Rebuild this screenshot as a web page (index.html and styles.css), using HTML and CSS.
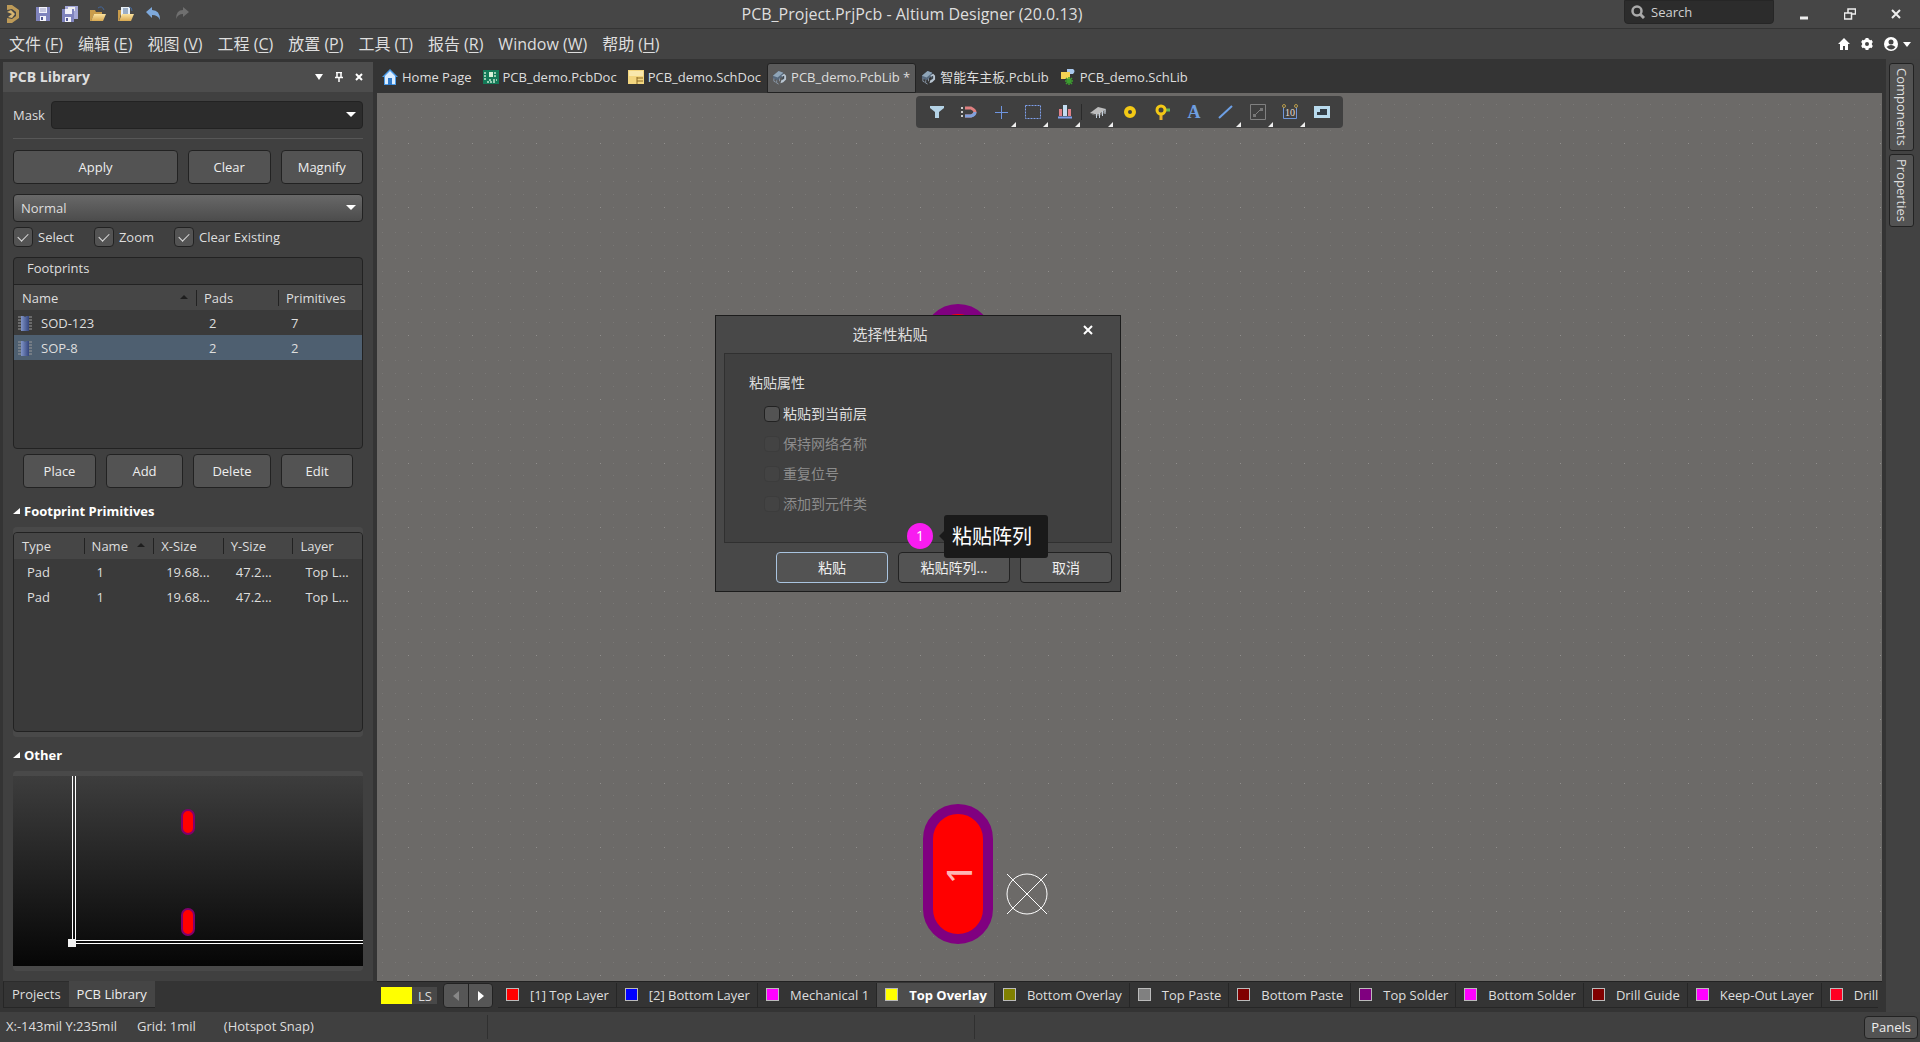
FILE: index.html
```html
<!DOCTYPE html>
<html lang="zh-CN">
<head>
<meta charset="utf-8">
<title>PCB_Project.PrjPcb - Altium Designer (20.0.13)</title>
<link rel="stylesheet" href="styles.css">
</head>
<body>
<svg class="defs" width="0" height="0" aria-hidden="true">
  <defs>
    <linearGradient id="chip" x1="0" x2="1"><stop offset="0" stop-color="#8094c8"/><stop offset="1" stop-color="#34457c"/></linearGradient>
    <linearGradient id="folder" x1="0" x2="0" y1="0" y2="1"><stop offset="0" stop-color="#fbe3a0"/><stop offset="1" stop-color="#d9a951"/></linearGradient>
    <symbol id="i-footprint" viewBox="0 0 16 16">
      <path d="M1 2h3M1 5h3M1 8h3M1 11h3M1 14h3M12 2h3M12 5h3M12 8h3M12 11h3M12 14h3" stroke="#9a9a9a"/>
      <path d="M4 1h2.500q1.500 1.500 3 0H12v15H4z" fill="url(#chip)"/>
    </symbol>
    <symbol id="i-lib" viewBox="0 0 16 16">
      <path d="M1 6l6-5 5 2v3l-6 5-5-2z" fill="#56687c"/>
      <path d="M1 6l6-5 5 2-6 5z" fill="#8fa5b8"/>
      <path d="M2 9v3l2 1M5 11v3l2 1M8 9v3" fill="none" stroke="#8a98a8"/>
      <path d="M10 6l3-2 2 2v4l-3 3-3 1 1-3 2-2z" fill="#b9c6d2"/>
      <path d="M11 7l2-1v3l-2 2z" fill="#3c4650"/>
    </symbol>
  </defs>
</svg>

<header class="titlebar">
  <div class="quick">
    <svg width="14" height="20" viewBox="0 0 14 20"><path d="M1 1l5 0 7 5v8l-7 5H1v-5l5 1 4-3V8L6 5 1 6z" fill="#bd9a57"/><path d="M1 8l5 2-4 3 4 1 3-4-4-4z" fill="#d9b671"/></svg>
    <button aria-label="Save"><svg width="14" height="14" viewBox="0 0 14 14"><path d="M0 0h14v14H0z" fill="#7f83bd"/><path d="M3 0h8v6H3zM4 9h6v5H4z" fill="#f3f3fb"/><path d="M4 2h6M4 4h6" stroke="#9a9cc4"/><path d="M5 10h2v3H5z" fill="#555a94"/></svg></button>
    <button aria-label="Save all"><svg width="16" height="16" viewBox="0 0 16 16"><path d="M3 0h13v13H3z" fill="#a3a6d6"/><path d="M6 1h7v4H6z" fill="#eee"/><path d="M0 3h12v13H0z" fill="#7f83bd"/><path d="M3 3h7v5H3zM3 11h6v5H3z" fill="#f3f3fb"/><path d="M4 12h2v3H4z" fill="#555a94"/></svg></button>
    <button aria-label="Open"><svg width="16" height="16" viewBox="0 0 16 16"><path d="M0 4h5l1 2h6v2H4L1 15H0z" fill="#c99c4b"/><path d="M4 8h12l-3 7H1z" fill="url(#folder)"/><path d="M8 2q4-3 6 2" stroke="#43669a" fill="none"/></svg></button>
    <button aria-label="Open project"><svg width="16" height="16" viewBox="0 0 16 16"><path d="M0 4h3v4l-2 7H0z" fill="#c99c4b"/><path d="M3 1h9v9H3z" fill="#e9f0f7"/><path d="M5 3h5M5 5h5M5 7h5" stroke="#4c6c96"/><path d="M4 8h12l-3 7H1z" fill="url(#folder)"/><path d="M11 1q3 0 3 4" stroke="#43669a" fill="none"/></svg></button>
    <button aria-label="Undo"><svg width="16" height="16" viewBox="0 0 16 16"><path d="M0 6l6-5v3q8 0 8 10-2-5-8-5v3z" fill="#7ea9dc"/></svg></button>
    <button aria-label="Redo"><svg width="16" height="16" viewBox="0 0 16 16"><path d="M15 6l-6-5v3Q2 4 2 13q2-5 7-5v3z" fill="#6f6f6f"/></svg></button>
  </div>
  <h1>PCB_Project.PrjPcb - Altium Designer (20.0.13)</h1>
  <div class="window-tools">
    <label class="search"><svg width="14" height="14" viewBox="0 0 14 14"><circle cx="6" cy="6" r="4.500" fill="none" stroke="#aaa" stroke-width="2.500"/><path d="M9 9l4 4" stroke="#aaa" stroke-width="3"/></svg><input type="text" placeholder="Search" aria-label="Search"></label>
    <button aria-label="Minimize"><svg width="12" height="12"><path d="M2 10h8" stroke="#eee" stroke-width="3"/></svg></button>
    <button aria-label="Restore"><svg width="12" height="12" viewBox="0 0 12 12"><path d="M4 5V1h7.500v5H8M.5 5h7v6h-7z" fill="none" stroke="#eee" stroke-width="1.500"/></svg></button>
    <button aria-label="Close"><svg width="12" height="12" viewBox="0 0 12 12"><path d="M2 2l8 8M10 2l-8 8" stroke="#eee" stroke-width="2"/></svg></button>
  </div>
</header>

<nav class="menubar">
  <a href="#">文件 (<u>F</u>)</a><a href="#">编辑 (<u>E</u>)</a><a href="#">视图 (<u>V</u>)</a><a href="#">工程 (<u>C</u>)</a><a href="#">放置 (<u>P</u>)</a><a href="#">工具 (<u>T</u>)</a><a href="#">报告 (<u>R</u>)</a><a href="#">Window (<u>W</u>)</a><a href="#">帮助 (<u>H</u>)</a>
  <div class="account">
    <button aria-label="Home"><svg width="12" height="12" viewBox="0 0 12 12"><path d="M6 0l6 6h-2v6H7V8H5v4H2V6H0z" fill="#fff"/></svg></button>
    <button aria-label="Settings"><svg width="14" height="14" viewBox="0 0 14 14"><circle cx="7" cy="7" r="3.500" fill="none" stroke="#fff" stroke-width="3"/><path d="M7 1v2M7 11v2M1.800 4l1.700 1M10.500 9l1.700 1M12.200 4l-1.700 1M3.500 9l-1.700 1" stroke="#fff" stroke-width="3"/></svg></button>
    <button class="user" aria-label="Account"><svg width="14" height="14" viewBox="0 0 14 14"><circle cx="7" cy="7" r="7" fill="#fff"/><circle cx="7" cy="5" r="2.500" fill="#444"/><path d="M2.500 10q4.500-4 9 0-4 5-9 0z" fill="#444"/></svg><svg width="8" height="5"><path d="M0 0h8L4 5z" fill="#fff"/></svg></button>
  </div>
</nav>

<main class="workspace">
  <aside class="side">
    <section class="panel">
      <header class="panel-head">
        <h2>PCB Library</h2>
        <button aria-label="Panel menu"><svg width="8" height="6"><path d="M0 0h8L4 6z" fill="#fff"/></svg></button>
        <button aria-label="Pin"><svg width="8" height="10" viewBox="0 0 8 10"><path d="M2 0v5M6 0v5M1 .5h6M0 5.500h8M4 6v4" stroke="#fff" stroke-width="1.500"/></svg></button>
        <button aria-label="Close panel"><svg width="8" height="8" viewBox="0 0 8 8"><path d="M1 1l6 6M7 1L1 7" stroke="#fff" stroke-width="2"/></svg></button>
      </header>
      <div class="panel-body">
        <div class="mask"><label for="mask">Mask</label><span class="combo dark"><select id="mask"><option></option></select></span></div>
        <div class="actions">
          <button class="btn wide">Apply</button><button class="btn">Clear</button><button class="btn">Magnify</button>
        </div>
        <span class="combo normal"><select aria-label="Display mode"><option>Normal</option></select></span>
        <div class="checks">
          <label><input type="checkbox" checked>Select</label>
          <label><input type="checkbox" checked>Zoom</label>
          <label><input type="checkbox" checked>Clear Existing</label>
        </div>
        <div class="listbox footprints">
          <h3>Footprints</h3>
          <table>
            <colgroup><col class="c-name"><col class="c-pads"><col></colgroup>
            <thead><tr><th class="sorted">Name</th><th>Pads</th><th>Primitives</th></tr></thead>
            <tbody>
              <tr><td><span class="fp"><svg width="16" height="16"><use href="#i-footprint"/></svg>SOD-123</span></td><td>2</td><td>7</td></tr>
              <tr class="selected"><td><span class="fp"><svg width="16" height="16"><use href="#i-footprint"/></svg>SOP-8</span></td><td>2</td><td>2</td></tr>
            </tbody>
          </table>
        </div>
        <div class="edit-actions">
          <button class="btn">Place</button><button class="btn">Add</button><button class="btn">Delete</button><button class="btn">Edit</button>
        </div>
        <h3 class="section"><svg width="7" height="6"><path d="M7 0v6H0z" fill="#fff"/></svg>Footprint Primitives</h3>
        <div class="frame">
          <div class="listbox primitives">
            <table>
              <colgroup><col class="c-five"><col class="c-five"><col class="c-five"><col class="c-five"><col></colgroup>
              <thead><tr><th>Type</th><th class="sorted">Name</th><th>X-Size</th><th>Y-Size</th><th>Layer</th></tr></thead>
              <tbody>
                <tr><td>Pad</td><td>1</td><td>19.68...</td><td>47.2...</td><td>Top L...</td></tr>
                <tr><td>Pad</td><td>1</td><td>19.68...</td><td>47.2...</td><td>Top L...</td></tr>
              </tbody>
            </table>
          </div>
        </div>
        <h3 class="section"><svg width="7" height="6"><path d="M7 0v6H0z" fill="#fff"/></svg>Other</h3>
        <div class="frame">
          <svg class="preview" height="190" role="img" aria-label="Footprint preview">
            <path d="M59.500 0v168M62.500 0v165M60 164.500h2000M60 167.500h2000" stroke="#fff"/>
            <path d="M55 163h8v8h-8z" fill="#f2f2f2"/>
            <g fill="#f00" stroke="#80006c" stroke-width="2"><rect x="169" y="34" width="12" height="24" rx="6"/><rect x="169" y="133" width="12" height="26" rx="6"/></g>
          </svg>
        </div>
      </div>
    </section>
    <nav class="panel-tabs"><button>Projects</button><button class="active">PCB Library</button></nav>
  </aside>

  <section class="editor">
    <nav class="doc-tabs">
      <a href="#"><svg width="16" height="16" viewBox="0 0 16 16"><path d="M8 0l8 8h-2v8H2V8H0z" fill="#4b9be8"/><path d="M8 2l5 5v8H3V7z" fill="#d9ecff"/><path d="M6 9h4v7H6z" fill="#2d78c8"/></svg>Home Page</a>
      <a href="#"><svg width="16" height="14" viewBox="0 0 16 14"><path d="M0 0h16v14H0z" fill="#147a58"/><path d="M6 2h4v5H6z" fill="#d8f0d8"/><path d="M2 2v8M12 2v5M6 10h2M10 10h4M4 12h8" stroke="#c4e8d0" stroke-width="1.500" stroke-dasharray="2 1"/></svg>PCB_demo.PcbDoc</a>
      <a href="#"><svg width="16" height="14" viewBox="0 0 16 14"><path d="M0 0h16v14H0z" fill="#f3d67f"/><path d="M1 1h14v5H1z" fill="#f9e8ac"/><path d="M9 8h6M9 11h6M9 7v7" stroke="#8c6b25"/></svg>PCB_demo.SchDoc</a>
      <a href="#" class="active"><svg width="15" height="15"><use href="#i-lib"/></svg>PCB_demo.PcbLib *</a>
      <a href="#"><svg width="15" height="15"><use href="#i-lib"/></svg>智能车主板.PcbLib</a>
      <a href="#"><svg width="16" height="16" viewBox="0 0 16 16"><path d="M7 0h6q3 2 0 5H7z" fill="#a8c8ee"/><path d="M1 3h9v7H1z" fill="#f4d253"/><path d="M9 8v8M5 12h8M6 9l6 6M12 9l-6 6" stroke="#3c9e2f" stroke-width="1.500"/></svg>PCB_demo.SchLib</a>
    </nav>

    <div class="canvas">
      <svg class="board" width="100%" height="100%" aria-label="Footprint drawing">
        <defs>
          <pattern id="grid" width="64" height="64" patternUnits="userSpaceOnUse" x="31" y="50">
            <path d="M0 12.500h64M0 25.500h64M0 38.500h64M0 51.500h64M0 .5h64" stroke="#7a7876" stroke-dasharray="1 12 1 12 1 11 1 12 1 12"/>
            <path d="M0 .5h1" stroke="#908e8c"/>
          </pattern>
        </defs>
        <rect width="100%" height="100%" fill="url(#grid)"/>
        <g fill="#f00" stroke="#800080" stroke-width="10">
          <rect x="551" y="216" width="60" height="130" rx="30"/>
          <rect x="551" y="716" width="60" height="130" rx="30"/>
        </g>
        <text class="pad-no" transform="translate(595 781) rotate(-90)" text-anchor="middle">1</text>
        <g fill="none" stroke="#fff"><circle cx="650" cy="801" r="20"/><path d="M630 781l40 40M670 781l-40 40"/></g>
      </svg>

      <div class="toolbar">
        <button aria-label="Filter"><svg viewBox="0 0 16 16"><path d="M1 2h14v2l-5 4v6H6V8L1 4z" fill="#b5d3e6"/></svg></button>
        <button aria-label="Snapping"><svg viewBox="0 0 16 16"><path d="M4 4h6q8 4 0 8H4" fill="none" stroke="#e08080" stroke-width="3"/><path d="M4 12h6q4-1 4-4" fill="none" stroke="#7fa0dc" stroke-width="3"/><path d="M1 3v11" stroke="#ccc" stroke-width="2" stroke-dasharray="2 2"/></svg></button>
        <button class="more" aria-label="Place cursor"><svg viewBox="0 0 16 16"><path d="M8.500 2v13M2 8.500h13" stroke="#6f95e0"/></svg></button>
        <button class="more" aria-label="Selection"><svg viewBox="0 0 16 16"><path d="M.5 1.500h15v13H.5z" fill="none" stroke="#7ea0ec" stroke-dasharray="2 1"/></svg></button>
        <button class="more" aria-label="Align"><svg viewBox="0 0 16 16"><path d="M2 5h3v7H2zM11 5h3v7h-3z" fill="#e08088"/><path d="M6 1h4v11H6z" fill="#c4ddf2"/><path d="M1 13.500h14" stroke="#7fa0ec" stroke-width="2"/></svg></button>
        <i class="sep"></i>
        <button class="more" aria-label="Component"><svg viewBox="0 0 16 16"><path d="M0 9l8-6 8 2-7 6z" fill="#bdbdbd"/><path d="M0 9l6 2 3-1 7-5v3l-7 4-6-1z" fill="#777"/><path d="M6.500 10v4M9.500 9v5M12.500 7v5M15 5v5" stroke="#c5d0db"/></svg></button>
        <button aria-label="Pad"><svg viewBox="0 0 16 16"><circle cx="8" cy="8" r="4" fill="none" stroke="#f3c915" stroke-width="4"/></svg></button>
        <button aria-label="Via"><svg viewBox="0 0 16 16"><path d="M7 9v7" stroke="#e6b32b" stroke-width="3"/><path d="M10 6h6" stroke="#65b650" stroke-width="3"/><circle cx="7" cy="6" r="4" fill="none" stroke="#f3c915" stroke-width="3"/></svg></button>
        <button class="letter" aria-label="String">A</button>
        <button class="more" aria-label="Line"><svg viewBox="0 0 16 16"><path d="M1 14L14 2" stroke="#6da0e6" stroke-width="2"/></svg></button>
        <button class="more" aria-label="Constraint"><svg viewBox="0 0 16 16"><path d="M.5.5h15v15H.5zM5 11l6-6" fill="none" stroke="#808080"/><path d="M3 10h3v3H3zM10 4h3v3h-3z" fill="#777"/></svg></button>
        <button class="more" aria-label="Dimension"><svg viewBox="0 0 16 16"><path d="M1.500 3v11.500h13V3" fill="none" stroke="#7096da"/><text x="3" y="12" class="dim">10</text><circle cx="2" cy="2" r="1.500" fill="none" stroke="#b89b4c"/><circle cx="14" cy="2" r="1.500" fill="none" stroke="#b89b4c"/></svg></button>
        <button aria-label="Board cutout"><svg viewBox="0 0 16 16"><path d="M0 2h16v12H0z" fill="#b9dbee"/><path d="M6 5h7v6H3V8h3z" fill="#333d46"/></svg></button>
      </div>

      <div class="dialog" role="dialog" aria-labelledby="dlg-title">
        <header><h2 id="dlg-title">选择性粘贴</h2><button aria-label="关闭"><svg width="10" height="10" viewBox="0 0 10 10"><path d="M1 1l8 8M9 1L1 9" stroke="#fff" stroke-width="2"/></svg></button></header>
        <fieldset>
          <h3>粘贴属性</h3>
          <label><input type="checkbox">粘贴到当前层</label>
          <label class="off"><input type="checkbox" disabled>保持网络名称</label>
          <label class="off"><input type="checkbox" disabled>重复位号</label>
          <label class="off"><input type="checkbox" disabled>添加到元件类</label>
        </fieldset>
        <footer><button class="btn focus">粘贴</button><button class="btn">粘贴阵列...</button><button class="btn last">取消</button></footer>
        <span class="badge">1</span>
        <span class="tip">粘贴阵列</span>
      </div>
    </div>

    <nav class="layers">
      <button class="layer-set"><i></i>LS</button>
      <span class="scroll"><button aria-label="Previous layer"><svg width="6" height="10"><path d="M6 0v10L0 5z" fill="#888"/></svg></button><button aria-label="Next layer"><svg width="6" height="10"><path d="M0 0v10l6-5z" fill="#fff"/></svg></button></span>
      <div class="layer-tabs">
        <button><i class="red"></i>[1] Top Layer</button>
        <button><i class="blue"></i>[2] Bottom Layer</button>
        <button><i class="magenta"></i>Mechanical 1</button>
        <button class="active"><i class="yellow"></i>Top Overlay</button>
        <button><i class="olive"></i>Bottom Overlay</button>
        <button><i class="gray"></i>Top Paste</button>
        <button><i class="maroon"></i>Bottom Paste</button>
        <button><i class="purple"></i>Top Solder</button>
        <button><i class="magenta"></i>Bottom Solder</button>
        <button><i class="maroon"></i>Drill Guide</button>
        <button><i class="magenta"></i>Keep-Out Layer</button>
        <button><i class="crimson"></i>Drill</button>
      </div>
    </nav>
  </section>

  <aside class="dock"><button>Components</button><button>Properties</button></aside>
</main>

<footer class="status">
  <div class="coords"><span>X:-143mil Y:235mil</span><span>Grid: 1mil</span><span class="snap">(Hotspot Snap)</span></div>
  <div class="message"></div>
  <button class="btn">Panels</button>
</footer>
</body>
</html>
```
FILE: styles.css
```css
* { box-sizing: border-box; }

body {
  margin: 0;
  min-height: 100vh;
  display: flex;
  flex-direction: column;
  background: #343434;
  color: #dedede;
  font: 13px/18px "Open Sans", "Noto Sans CJK SC", sans-serif;
}

h1, h2, h3 { margin: 0; font-size: 13px; font-weight: 400; }
button, input, select { font: inherit; color: inherit; margin: 0; }
button { padding: 0; border: 0; background: none; white-space: nowrap; }
svg { display: block; flex: none; }
a { color: inherit; text-decoration: none; }
.defs { position: absolute; }

.btn {
  height: 34px;
  border: 1px solid #222;
  border-radius: 4px;
  background: #535353;
  color: #eee;
}

/* Title bar */
.titlebar {
  height: 29px;
  display: grid;
  grid-template-columns: 1fr auto 1fr;
  align-items: center;
  background: #464646;
  border-bottom: 1px solid #343434;
}
.titlebar h1 { font-size: 16px; margin-right: 96px; }
.quick { display: flex; align-items: center; gap: 12px; padding-left: 6px; }
.quick > svg { margin-right: 4px; }
.window-tools { display: flex; justify-content: flex-end; align-self: stretch; align-items: center; padding-right: 1px; }
.window-tools button { width: 46px; display: flex; justify-content: center; }
.search {
  width: 150px;
  height: 24px;
  align-self: flex-start;
  margin-right: 7px;
  display: flex;
  align-items: center;
  gap: 6px;
  padding: 0 6px;
  background: #2c2c2c;
  border: 1px solid #262626;
  border-radius: 0 0 4px 4px;
}
.search input { flex: 1; min-width: 0; padding: 0; border: 0; background: none; }
.search input::placeholder { color: #d0d0d0; opacity: 1; }

/* Menu */
.menubar {
  height: 30px;
  display: flex;
  align-items: center;
  gap: 15px;
  padding: 0 9px;
  background: #434343;
  font-size: 16px;
  white-space: nowrap;
}
.menubar u { text-underline-offset: 2px; }
.account { margin-left: auto; display: flex; align-items: center; gap: 10px; }
.account .user { display: flex; align-items: center; gap: 5px; }

/* Workspace */
.workspace { flex: 1; display: flex; min-height: 0; }
.side { width: 377px; flex: none; display: flex; flex-direction: column; padding: 3px 4px 4px 3px; }
.panel { flex: 1; background: #404040; }
.panel-head {
  height: 30px;
  display: flex;
  align-items: center;
  gap: 12px;
  padding: 0 10px 0 6px;
  background: #4d4d4d;
}
.panel-head h2 { font-weight: 700; font-size: 14px; margin-right: auto; }
.panel-body { padding: 9px 10px 10px; display: flex; flex-direction: column; }

.mask { display: flex; align-items: center; gap: 6px; padding-bottom: 9px; border-bottom: 1px solid #575757; }
.mask .combo { flex: 1; }
.combo { position: relative; display: block; }
.combo select {
  display: block;
  width: 100%;
  height: 28px;
  padding: 0 7px;
  appearance: none;
  border: 1px solid #222;
  border-radius: 4px;
  background: #2c2c2c;
}
.combo.normal select { background: linear-gradient(#686868, #4c4c4c); }
.combo::after {
  content: "";
  position: absolute;
  right: 7px;
  top: 11px;
  border: 5px solid transparent;
  border-top-color: #fff;
  border-bottom-width: 0;
}

.actions { display: grid; grid-template-columns: 2fr 1fr 1fr; gap: 10px; margin: 11px 0 10px; }
.checks { display: flex; gap: 20px; margin: 5px 0 10px; }
.checks label { display: flex; align-items: center; gap: 5px; }
input[type="checkbox"] {
  appearance: none;
  width: 20px;
  height: 20px;
  margin: 0;
  border: 1px solid #222;
  border-radius: 4px;
  background: #535353;
}
input[type="checkbox"]:checked::before {
  content: "";
  display: block;
  width: 9px;
  height: 5px;
  margin: 5px 0 0 4px;
  border: solid #ddd;
  border-width: 0 0 1px 1px;
  rotate: -45deg;
}

/* Lists */
.listbox { border: 1px solid #222; border-radius: 4px; background: #3a3a3a; overflow: hidden; }
.listbox h3 { height: 27px; padding: 1px 13px; border-bottom: 1px solid #222; }
.footprints { height: 192px; }
.primitives { height: 200px; }
table { width: 100%; table-layout: fixed; border-collapse: collapse; }
th, td { height: 25px; padding: 0 0 0 13px; text-align: left; font-weight: 400; overflow: hidden; white-space: nowrap; }
th { padding-left: 8px; background: #464646; position: relative; }
th + th { background: linear-gradient(#222, #222) no-repeat 0 50% / 1px 16px #464646; }
.sorted::after {
  content: "";
  position: absolute;
  right: 8px;
  top: 10px;
  border: 4px solid transparent;
  border-bottom-color: #1e1e1e;
  border-top-width: 0;
}
.c-name { width: 182px; }
.c-pads { width: 82px; }
.c-five { width: 20%; }
.selected { background: #4e5f70; }
.primitives th { height: 26px; }
.footprints td:first-child { padding-left: 3px; }
.fp { display: flex; align-items: center; gap: 8px; }

.edit-actions { display: grid; grid-template-columns: 73fr 77fr 78fr 72fr; gap: 10px; padding: 5px 10px 12px; }
.section { display: flex; align-items: center; gap: 4px; height: 22px; font-weight: 700; color: #fff; margin-bottom: 5px; }
.frame { padding: 5px 0; background: #494949; border-radius: 4px; }
.frame + .section { margin-top: 7px; }
.preview { width: 100%; background: linear-gradient(#3d3d3d, #060606); }

.panel-tabs { display: flex; height: 27px; }
.panel-tabs button { padding: 0 8px 2px; border: 1px solid #262626; border-top-color: #2c2c2c; border-right-width: 0; }
.panel-tabs .active { background: #454545; border-color: #454545 #262626 #262626 #454545; border-left-width: 0; color: #eee; }

/* Editor */
.editor { flex: 1; min-width: 0; display: flex; flex-direction: column; }
.doc-tabs { height: 34px; display: flex; align-items: flex-end; }
.doc-tabs a { height: 30px; display: flex; align-items: center; gap: 4px; padding: 0 5px 2px 4px; border: 1px solid transparent; white-space: nowrap; }
.doc-tabs .active { background: #5a5a5a; border-color: #222; border-radius: 3px 3px 0 0; }
.canvas { flex: 1; position: relative; display: flex; flex-direction: column; background: #6c6a68; overflow: hidden; }
.board { position: absolute; inset: 0; }
.pad-no { font: 500 34px "Noto Sans", sans-serif; fill: #ffb4b4; stroke: none; }

.toolbar {
  position: relative;
  align-self: center;
  display: flex;
  align-items: center;
  height: 32px;
  margin-top: 3px;
  padding: 0 5px;
  background: #404040;
  border-radius: 4px;
}
.toolbar button { width: 32px; height: 32px; display: flex; align-items: center; justify-content: center; position: relative; }
.toolbar svg { width: 16px; height: 16px; }
.toolbar .letter { font: 700 18px "Liberation Serif", serif; color: #6f9fe0; }
.toolbar .sep { width: 1px; height: 16px; background: #2a2a2a; }
.more::after { content: ""; position: absolute; right: 1px; bottom: 1px; border: solid transparent; border-width: 5px 0 0 5px; border-bottom: 5px solid #eee; border-top: 0; }
.dim { font: 10px "Liberation Serif", serif; fill: #e6ddd0; }

/* Paste dialog */
.dialog {
  position: absolute;
  left: 338px;
  top: 222px;
  width: 406px;
  padding: 0 8px 8px;
  background: #484848;
  border: 1px solid #1c1c1c;
  font-size: 14px;
}
.dialog header { height: 37px; display: grid; grid-template-columns: 48px 1fr 48px; align-items: center; }
.dialog h2 { grid-column: 2; padding: 0 56px 2px 0; text-align: center; font-size: 15px; }
.dialog header button { height: 28px; display: flex; align-items: center; justify-content: center; align-self: start; }
.dialog fieldset { margin: 0 0 9px; min-width: 0; height: 190px; padding: 19px 24px; border: 1px solid #303030; background: #404040; }
.dialog h3 { font-size: 14px; line-height: 20px; margin-bottom: 6px; }
.dialog label { display: flex; align-items: center; gap: 3px; height: 30px; padding-left: 15px; }
.dialog input { width: 16px; height: 16px; }
.dialog .off { color: #8c8c8c; }
.dialog .off input { border-color: #3c3c3c; background: #434343; }
.dialog footer { display: flex; justify-content: flex-end; gap: 10px; }
.dialog .btn { width: 112px; height: 31px; }
.dialog .last { width: 92px; }
.dialog .focus { border-color: #a9c4e0; }
.badge {
  position: absolute;
  left: 191px;
  top: 207px;
  width: 26px;
  height: 26px;
  border-radius: 50%;
  background: #f81cf0;
  color: #fff;
  line-height: 25px;
  text-align: center;
}
.tip {
  position: absolute;
  left: 228px;
  top: 199px;
  width: 104px;
  height: 43px;
  padding-left: 8px;
  border-radius: 3px;
  background: #1a1a1a;
  color: #fff;
  font-size: 20px;
  line-height: 43px;
}
.tip::before { content: ""; position: absolute; right: 100%; top: 16px; border: 5px solid transparent; border-right-color: #1a1a1a; border-left-width: 0; }

/* Layers */
.layers { height: 31px; display: flex; padding: 1px 0 4px 4px; border-top: 1px solid #222; }
.layer-set { height: 17px; width: 56px; margin: 4px 6px 0 0; display: flex; align-items: center; gap: 6px; background: #484848; }
.layer-set i { width: 31px; height: 17px; background: #ff0; }
.scroll { display: flex; height: 25px; margin-right: 5px; border: 1px solid #222; border-radius: 4px; background: #565656; }
.scroll button { width: 24px; display: flex; align-items: center; justify-content: center; }
.scroll button + button { border-left: 1px solid #222; }
.layer-tabs { flex: 1; min-width: 0; display: flex; overflow: hidden; }
.layer-tabs button { flex: none; display: flex; align-items: center; gap: 11px; padding: 0 7px 1px 8px; border-right: 1px solid #262626; border-bottom: 1px solid #262626; }
.layer-tabs button:last-child { padding-right: 0; border-right: 0; }
.layer-tabs i { width: 13px; height: 13px; border: 1px solid #bbb; }
.layer-tabs .active { background: #4d4d4d; color: #fff; font-weight: 700; }
.red { background: #f00; }
.blue { background: #00f; }
.magenta { background: #f0f; }
.yellow { background: #ff0; }
.olive { background: #808000; }
.gray { background: #808080; }
.maroon { background: #800000; }
.purple { background: #800080; }
.crimson { background: #f02; }

/* Right dock */
.dock { width: 38px; flex: none; display: flex; flex-direction: column; gap: 3px; padding: 4px 6px 0 3px; border-left: 4px solid #343434; background: #424242; }
.dock button { width: 25px; writing-mode: vertical-rl; padding: 4px 0; border: 1px solid #222; border-radius: 3px; background: #535353; }

/* Status bar */
.status { height: 30px; flex: none; display: flex; align-items: center; background: #404040; padding-right: 2px; }
.coords { width: 488px; display: flex; gap: 20px; padding: 0 0 2px 6px; }
.coords .snap { margin-left: 8px; }
.coords, .message { height: 24px; align-items: center; border-right: 1px solid #303030; }
.message { width: 487px; }
.status .btn { height: 23px; margin-left: auto; padding: 0 6px; }
```
